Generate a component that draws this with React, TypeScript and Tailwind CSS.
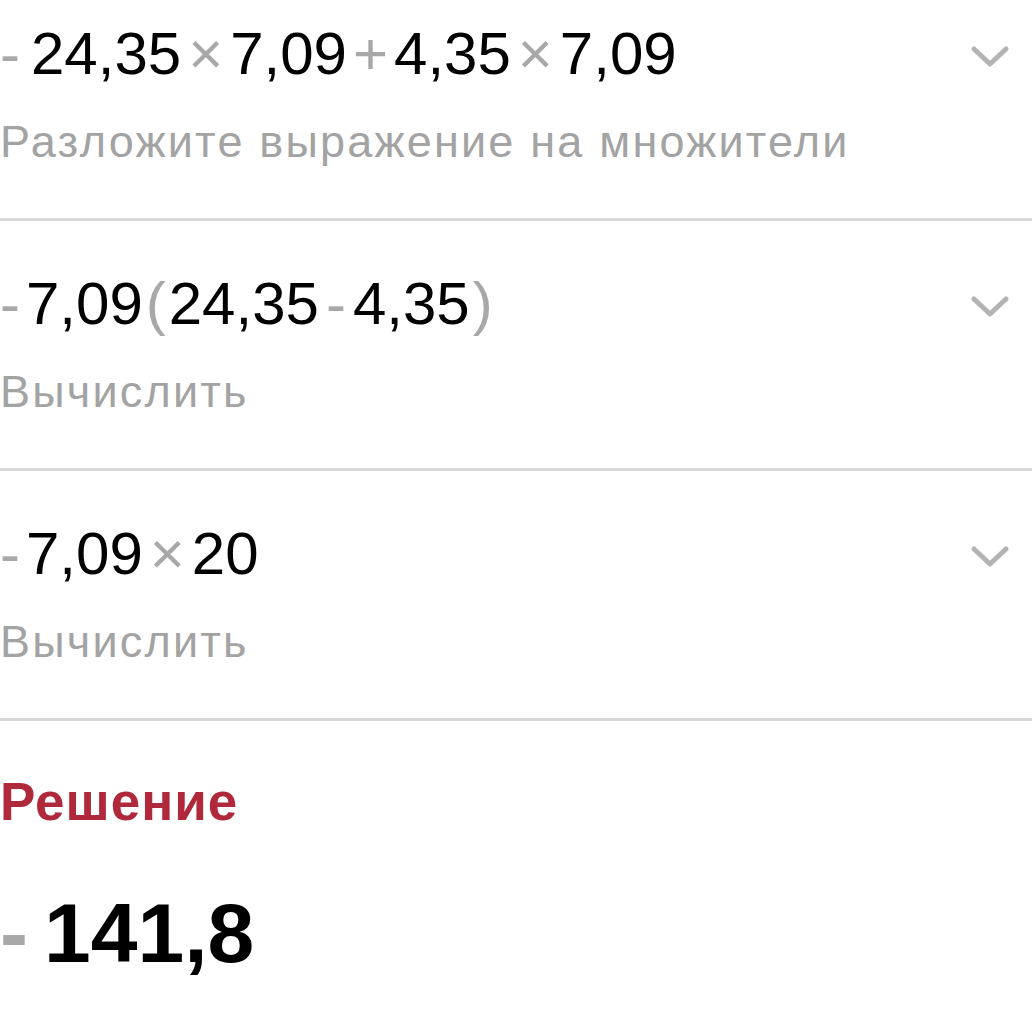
import React from 'react';

type Token = { t: string; op?: boolean; cls?: string };

const steps: { expr: Token[]; hint: string }[] = [
  {
    expr: [
      { t: '-', op: true, cls: 'mr-[11px]' },
      { t: '24,35' },
      { t: '×', op: true, cls: 'mx-[7px]' },
      { t: '7,09' },
      { t: '+', op: true, cls: 'mx-[6px]' },
      { t: '4,35' },
      { t: '×', op: true, cls: 'mx-[7px]' },
      { t: '7,09' },
    ],
    hint: 'Разложите выражение на множители',
  },
  {
    expr: [
      { t: '-', op: true, cls: 'mr-[6px]' },
      { t: '7,09' },
      { t: '(', op: true, cls: 'mx-[3px]' },
      { t: '24,35' },
      { t: '-', op: true, cls: 'mx-[7px]' },
      { t: '4,35' },
      { t: ')', op: true, cls: 'mx-[3px]' },
    ],
    hint: 'Вычислить',
  },
  {
    expr: [
      { t: '-', op: true, cls: 'mr-[6px]' },
      { t: '7,09' },
      { t: '×', op: true, cls: 'mx-[7px]' },
      { t: '20' },
    ],
    hint: 'Вычислить',
  },
];

function Chevron() {
  return (
    <svg width="40" height="24" viewBox="0 0 40 24" className="mt-[6px] shrink-0">
      <polyline
        points="4,4 20,19 36,4"
        fill="none"
        stroke="#b3b3b3"
        strokeWidth="5"
        strokeLinecap="round"
        strokeLinejoin="round"
      />
    </svg>
  );
}

function Step({ expr, hint, first }: { expr: Token[]; hint: string; first?: boolean }) {
  return (
    <div className={`${first ? 'pt-[19px]' : 'pt-[48px]'} pb-[48px] border-b-[3px] border-[#d9d9d9]`}>
      <div className="flex items-center justify-between pr-[22px]">
        <div className="flex items-center text-[60px] leading-[70px] whitespace-nowrap">
          {expr.map((tok, i) => (
            <span key={i} className={`${tok.op ? 'text-[#a8a8a8]' : 'text-black'} ${tok.cls ?? ''}`}>
              {tok.t}
            </span>
          ))}
        </div>
        <Chevron />
      </div>
      <div className="mt-[25px] text-[45px] leading-[56px] tracking-[2.2px] text-[#a3a3a3] whitespace-nowrap">
        {hint}
      </div>
    </div>
  );
}

export default function App() {
  return (
    <div className="w-[1032px] h-[1033px] bg-white overflow-hidden font-['Liberation_Sans',Arial,sans-serif]">
      {steps.map((s, i) => (
        <Step key={i} expr={s.expr} hint={s.hint} first={i === 0} />
      ))}
      <div className="pt-[49px]">
        <div className="text-[53px] leading-[64px] font-bold tracking-[1px] text-[#b0283c]">Решение</div>
        <div className="mt-[51px] flex items-center text-[84px] leading-[96px] font-bold whitespace-nowrap">
          <span className="text-[#a8a8a8]">-</span>
          <span className="text-black ml-[16px]">141,8</span>
        </div>
      </div>
    </div>
  );
}
